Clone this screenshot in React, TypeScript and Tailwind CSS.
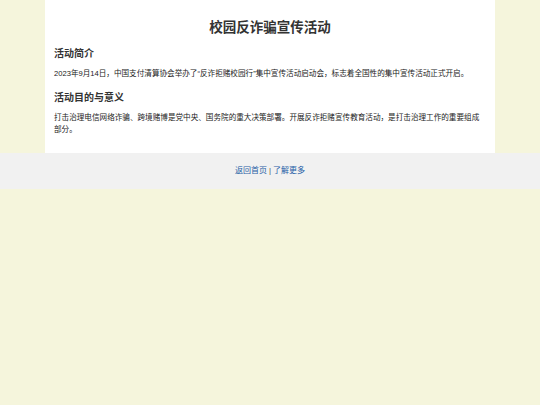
export default function App() {
  return (
    <div
      className="min-h-[405px] bg-[#f5f5dc] text-[#333]"
      style={{ fontFamily: '"Liberation Sans", Arial, "Noto Sans CJK SC", sans-serif' }}
    >
      <div className="mx-auto w-[450px] bg-white px-[9px] pt-[10px] pb-[17px]">
        <h1 className="mt-[7px] text-center text-[13.5px] font-bold leading-[22px]">校园反诈骗宣传活动</h1>
        <h2 className="mt-[6.5px] text-[10px] font-bold leading-[15px]">活动简介</h2>
        <p className="mt-[7.5px] text-[7.6px] leading-[12px] text-[#222]">
          2023年9月14日，中国支付清算协会举办了“反诈拒赌校园行”集中宣传活动启动会，标志着全国性的集中宣传活动正式开启。
        </p>
        <h2 className="mt-[9.5px] text-[10px] font-bold leading-[15px]">活动目的与意义</h2>
        <p className="mt-[7.5px] text-[7.6px] leading-[12px] text-[#222]">
          打击治理电信网络诈骗、跨境赌博是党中央、国务院的重大决策部署。开展反诈拒赌宣传教育活动，是打击治理工作的重要组成部分。
        </p>
      </div>
      <div className="flex h-[36px] items-center justify-center bg-[#f1f1f1] text-[8px]">
        <a href="#" className="text-[#1f5ea6]">返回首页</a>
        <span className="mx-[2px] text-[#555]">|</span>
        <a href="#" className="text-[#1f5ea6]">了解更多</a>
      </div>
    </div>
  )
}
